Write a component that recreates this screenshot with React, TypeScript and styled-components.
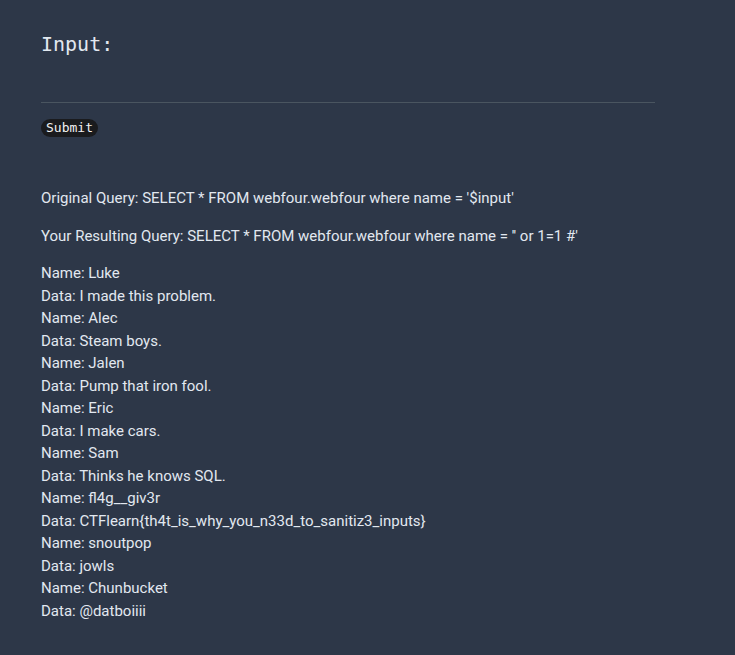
import React from "react";
import styled, { createGlobalStyle } from "styled-components";

const GlobalStyle = createGlobalStyle`
  html, body {
    margin: 0;
    padding: 0;
    background: #2d3748;
  }
  body {
    min-height: 655px;
    font-family: Roboto, "Liberation Sans", sans-serif;
  }
`;

const Page = styled.main`
  width: 614px;
  padding: 32px 0 0 41px;
  color: #e2e8f0;
`;

const Title = styled.h1`
  margin: 0;
  font-family: "DejaVu Sans Mono", "Liberation Mono", monospace;
  font-weight: 400;
  font-size: 20px;
  line-height: 24px;
  color: #e2e8f0;
`;

const Form = styled.form`
  display: flex;
  flex-direction: column;
  align-items: flex-start;
  margin: 0;
`;

const Divider = styled.div`
  margin-top: 46px;
  width: 100%;
  height: 1px;
  background: #4a5560;
`;

const SubmitButton = styled.button`
  margin-top: 16px;
  height: 18px;
  padding: 0 5px;
  border: none;
  border-radius: 9px;
  background: #1a1b1e;
  color: #f1f1f1;
  font-family: "DejaVu Sans Mono", "Liberation Mono", monospace;
  font-size: 13px;
  line-height: 18px;
  cursor: pointer;
`;

const Results = styled.section`
  padding-top: 35px;
  font-size: 15px;
  line-height: 22.5px;
`;

const Para = styled.p`
  margin: 15px 0;
`;

const Line = styled.div``;

const rows: [string, string][] = [
  ["Luke", "I made this problem."],
  ["Alec", "Steam boys."],
  ["Jalen", "Pump that iron fool."],
  ["Eric", "I make cars."],
  ["Sam", "Thinks he knows SQL."],
  ["fl4g__giv3r", "CTFlearn{th4t_is_why_you_n33d_to_sanitiz3_inputs}"],
  ["snoutpop", "jowls"],
  ["Chunbucket", "@datboiiii"],
];

export default function App() {
  return (
    <>
      <GlobalStyle />
      <Page>
        <Title>Input:</Title>
        <Form onSubmit={(e) => e.preventDefault()}>
          <Divider />
          <SubmitButton type="submit">Submit</SubmitButton>
        </Form>
        <Results>
          <Para>Original Query: SELECT * FROM webfour.webfour where name = '$input'</Para>
          <Para>Your Resulting Query: SELECT * FROM webfour.webfour where name = '' or 1=1 #'</Para>
          <Para>
            {rows.map(([name, data]) => (
              <React.Fragment key={name}>
                <Line>Name: {name}</Line>
                <Line>Data: {data}</Line>
              </React.Fragment>
            ))}
          </Para>
        </Results>
      </Page>
    </>
  );
}
